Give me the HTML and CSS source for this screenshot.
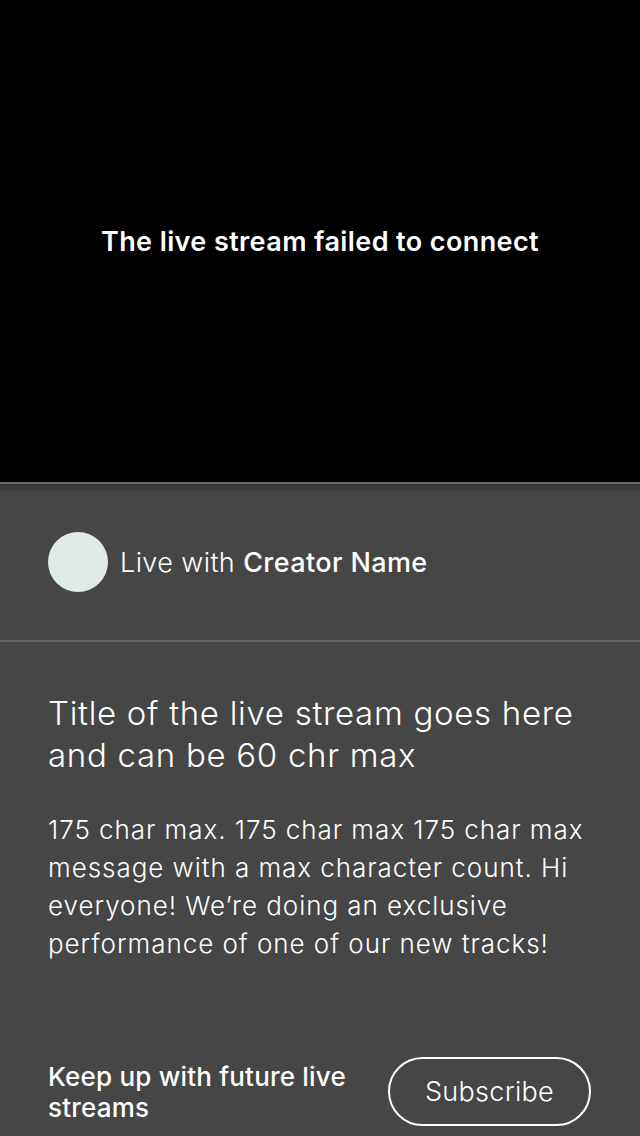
FILE: index.html
```html
<!DOCTYPE html>
<html>
<head>
<meta charset="utf-8">
<link rel="stylesheet" href="styles.css">
</head>
<body>
<div class="player">
  <p class="error">The live stream failed to connect</p>
</div>
<div class="panel">
  <div class="creator">
    <div class="avatar"></div>
    <div class="live">Live with <strong>Creator Name</strong></div>
  </div>
  <div class="info">
    <h1 class="title">Title of the live stream goes here and can be 60 chr max</h1>
    <p class="desc">175 char max. 175 char max 175 char max message with a max character count. Hi everyone! We’re doing an exclusive performance of one of our new tracks!</p>
  </div>
  <div class="cta">
    <p class="keep">Keep up with future live streams</p>
    <button class="subscribe">Subscribe</button>
  </div>
</div>
</body>
</html>
```
FILE: styles.css
```css
html, body {
  margin: 0;
  padding: 0;
  background: #464646;
  height: 1136px;
  overflow: hidden;
}
body {
  font-family: Inter, "Liberation Sans", sans-serif;
  color: #fff;
}
.player {
  height: 482px;
  background: #000;
  border-bottom: 2px solid #676767;
  display: flex;
  justify-content: center;
}
.error {
  margin: 225px 0 0;
  font-weight: 600;
  font-size: 27px;
  line-height: 34px;
  letter-spacing: 0.4px;
}
.panel {
  background: linear-gradient(#333 0px, #464646 9px);
}
.creator {
  height: 156px;
  display: flex;
  align-items: center;
  padding-left: 48px;
  gap: 12px;
  border-bottom: 2px solid #646464;
}
.avatar {
  width: 60px;
  height: 60px;
  border-radius: 50%;
  background: #e0ebe7;
}
.live {
  font-size: 27px;
  font-weight: 300;
  letter-spacing: 0.4px;
}
.live strong {
  font-weight: 500;
}
.info {
  padding: 50px 48px 0;
}
.title {
  margin: 0;
  font-size: 33px;
  font-weight: 300;
  line-height: 42px;
  letter-spacing: 0.7px;
}
.desc {
  margin: 35px 0 0;
  font-size: 26px;
  font-weight: 300;
  line-height: 38px;
  letter-spacing: 0.95px;
}
.cta {
  display: flex;
  align-items: center;
  justify-content: space-between;
  padding: 94px 49px 0 48px;
}
.keep {
  margin: 0;
  width: 320px;
  font-weight: 500;
  font-size: 26px;
  line-height: 31px;
  letter-spacing: 0.2px;
}
.subscribe {
  width: 203px;
  height: 69px;
  border: 2px solid #fff;
  border-radius: 35px;
  background: transparent;
  color: #fff;
  font-family: Inter, sans-serif;
  font-weight: 300;
  font-size: 27px;
  letter-spacing: 0.3px;
  padding: 0;
}
```
